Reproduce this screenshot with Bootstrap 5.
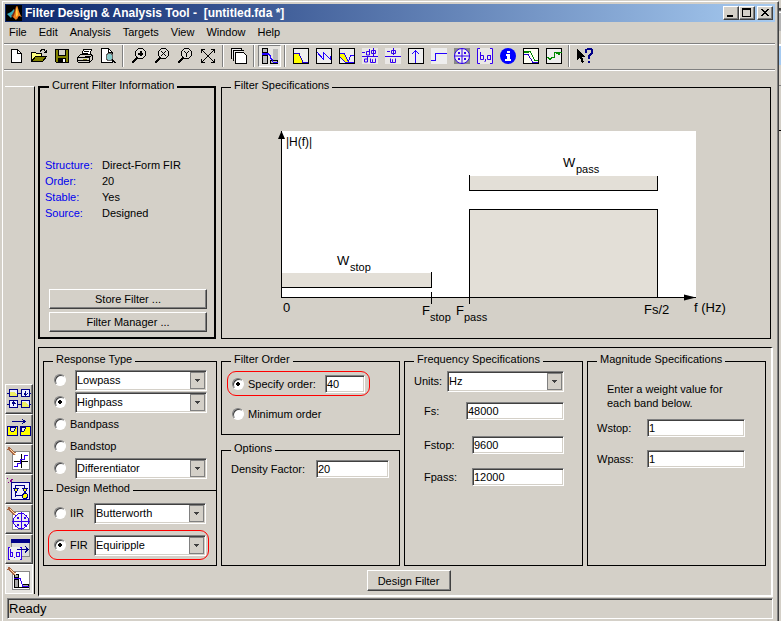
<!DOCTYPE html>
<html lang="en">
<head>
<meta charset="utf-8">
<meta name="viewport" content="width=device-width, initial-scale=1">
<title>Filter Design &amp; Analysis Tool</title>
<link href="https://cdn.jsdelivr.net/npm/bootstrap@5.3.0/dist/css/bootstrap.min.css" rel="stylesheet">
<style>
:root{--face:#d4d0c8;--dark:#404040;--mid:#808080}
body{background:linear-gradient(var(--face) 8px,var(--dark) 8px 10px,#fff 12px 13px,#b4b4b4 13px 31px,var(--face) 31px 44px,#fff 44px 46px,#a6caf0 46px 65px,var(--face) 65px 85px,var(--mid) 85px 86px,var(--face) 86px 130px,#000 130px 131px,var(--face) 131px) right top/3px 100% no-repeat var(--face);color:#000;font:11px/14px "Liberation Sans",Arial,sans-serif}
svg{display:block;flex:none}
.app-window{min-height:calc(100vh - 1px);background:var(--face);border-left:1px solid #fff;border-right:1px solid var(--dark);box-shadow:inset -1px 0 var(--mid);margin:1px 2px 0;padding:2px;border-top:1px solid #fff}
.title-strip{background:linear-gradient(90deg,#0a246a,#a6caf0);height:18px;color:#fff;font:bold 12px/18px "Liberation Sans",Arial,sans-serif;padding:0 2px 0 1px;margin-right:1px}
.title-strip h1{font:inherit;margin:0 0 0 1px;white-space:pre}
.raised{background:var(--face);border:1px solid;border-color:#fff var(--dark) var(--dark) #fff;box-shadow:inset -1px -1px var(--mid);border-radius:0;padding:0;color:#000;font-size:11px;line-height:14px}
.raised:hover{background:var(--face)}
.caption-btn{width:16px;height:14px}
.close-btn{margin-left:2px}
.menu-strip{height:21px}
.menu-strip .nav{margin-left:-2px}
.menu-strip .nav-link{color:#000;padding:3px 6px;line-height:14px}
.tool-strip{height:27px;border-top:1px solid var(--mid);border-bottom:1px solid var(--mid);box-shadow:inset 0 1px #fff,0 1px #fff;margin:0 1px 1px -1px;padding-top:1px}
.tool{width:23px;height:22px;padding:0;border:0;border-radius:0;display:flex;align-items:center;justify-content:center}
.tool.pressed{border:1px solid;border-color:var(--mid) #fff #fff var(--mid);background:#e6e4e0}
.tool-sep{width:2px;height:22px;margin:0 3px;border-left:1px solid var(--mid);border-right:1px solid #fff}
.side-strip{width:30px;border-top:1px solid #fff;border-right:1px solid #000;margin:15px 0 4px}
.side-btn{width:28px;height:30px;display:flex;align-items:center;justify-content:center}
.side-btn.pressed{border-color:#fff;box-shadow:none;background:#e6e4e0}
.work{padding:7px 3px 1px 3px}
.top-row{gap:5px;padding-right:2px}
.info-col{width:178px}
fieldset.group{border:1px solid #000;min-width:0}
fieldset.thick{border-width:2px}
fieldset.group>legend{float:none;width:auto;font-size:11px;line-height:14px;margin:0 0 -4px 9px;padding:0 3px 4px}
.facts{margin:65px 0 0 5px;line-height:16px;display:grid;grid-template-columns:57px 1fr}
.facts dt{font-weight:400;color:#00e}
.facts dt,.facts dd{margin:0}
.store-btns{gap:3px;padding:0 7px 5px 9px}
.push{height:20px}
.lower{border:solid;border-width:1px 2px 2px 1px;border-color:#000 #fff #fff #000;margin-top:8px;padding:4px 5px 4px 4px}
.quad{display:grid;grid-template-columns:174px repeat(3,minmax(0,1fr));gap:4px}
.pick{appearance:none;flex:none;width:12px;height:12px;margin:0 4px 0 0;border-radius:50%;border:1px solid;border-color:var(--mid) #fff #fff var(--mid);background:#fff;box-shadow:inset 1px 1px var(--dark)}
.pick:checked{background:radial-gradient(circle at 5px 5px,#000 0 2px,#fff 2px)}
.row-line{height:22px;display:flex;align-items:center;padding:0 9px 0 10px}
.row-line select.field{margin-left:5px}
.field{border:1px solid;border-color:var(--mid) #fff #fff var(--mid);box-shadow:inset 1px 1px var(--dark),inset -1px -1px var(--face);border-radius:0;background-color:#fff;color:#000;font:11px/14px "Liberation Sans",Arial,sans-serif;height:18px;padding:1px 1px;min-width:0}
select.field{height:21px;appearance:none;padding:1px 18px 1px 1px;background:#fff url("data:image/svg+xml,%3Csvg xmlns='http://www.w3.org/2000/svg' width='15' height='17' shape-rendering='crispEdges'%3E%3Cpath fill='%23d4d0c8' d='M0 0h15v17H0z'/%3E%3Cpath fill='none' stroke='%23808080' d='M0 .5h14.5V16.5H.5V0'/%3E%3Cpath fill='%23404040' d='M5 7h5v1H5zM6 8h3v1H6zM7 9h1v1H7z'/%3E%3C/svg%3E") no-repeat right 1px center}
.ring{border:1px solid red;border-radius:9px}
.ring.unmarked{border-color:transparent}
.design{margin-top:-9px}
.resp{padding-bottom:11px;border-bottom:0!important}
.resp .rows{padding-top:3px}
.design .rows{padding:3px 0 5px;display:grid;gap:2px}
.design .row-line{height:30px;margin:0 7px 0 4px;padding:0 2px 0 5px}
.design .row-line label{width:19px}
.col-two{gap:6px}
.order-body{padding:5px 29px 8px 5px}
.order-body .ring{height:25px;padding:0 4px}
.min-line{height:25px;margin-top:5px;padding-left:5px}
.w-order{width:40px}
.opt-body{padding:5px 10px 8px 9px}
.freq-body{padding:5px 18px 10px 9px}
.freq-body .ln{display:flex;align-items:center;justify-content:space-between;height:20px}
.freq-body .ln+.ln{margin-top:12px;padding-left:10px}
.freq-body .ln.fs-line{margin-top:10px}
.freq-body .ln.fs-line+.ln{margin-top:14px}
.w-units{width:117px}.w-fs{width:98px}.w-fp{width:92px}.w-dens{width:73px}.w-mag{width:98px}
.mag-body{padding:16px 20px 0 9px}
.mag-body p{margin:0 0 8px 10px}
.mag-body .ln{display:flex;align-items:center;justify-content:space-between;height:19px;margin-bottom:12px}
.actions{padding:4px 0 0 8px}
.go{width:84px;height:21px}
.state{height:21px;border:1px solid;border-color:var(--mid) #fff #fff var(--mid);box-shadow:inset 1px 1px var(--dark);margin:0 3px 0 2px;padding:2px 1px;font-size:13px;line-height:16px}
.plot{margin:38px auto 13px;max-width:100%;font-size:13px}
.plot .sub{font-size:11px}.plot .fn{font-size:12px}
</style>
<script src="https://cdn.jsdelivr.net/npm/bootstrap@5.3.0/dist/js/bootstrap.bundle.min.js"></script>
</head>
<body>
<div class="app-window d-flex flex-column">
<header>
<div class="title-strip d-flex align-items-center">
<svg width="18" height="16" viewBox="0 0 18 16"><path fill="#000" d="M0 0h16v16H0z"/><path fill="#39a9b8" d="M1 9l4-2 3-3 1 2-4 7z"/><path fill="#7b2b12" d="M5 11c3-2 4-10 6-10l1 13-4-1z"/><path fill="#f08020" d="M7 12c2-2 3-11 4-11s2 8 5 11l-3-1-3 4z"/><path fill="#ffd040" d="M10 5l1-3 1 8-2 2z"/></svg>
<h1>Filter Design &amp; Analysis Tool -  [untitled.fda *]</h1>
<button class="btn raised caption-btn ms-auto d-flex" aria-label="Minimize"><svg width="14" height="12"><path d="M3 8h6v2H3z"/></svg></button>
<button class="btn raised caption-btn d-flex" aria-label="Maximize"><svg width="14" height="12" shape-rendering="crispEdges"><path fill-rule="evenodd" d="M2 1h9v9H2zM3 3h7v6H3z"/></svg></button>
<button class="btn raised caption-btn close-btn d-flex" aria-label="Close"><svg width="14" height="12" shape-rendering="crispEdges"><path d="M3 2h2v1h1v1h2V3h1V2h2v1h-1v1H9v1H8v1h1v1h1v1h1v1H9V8H8V7H6v1H5v1H3V8h1V7h1V6h1V5H5V4H4V3H3z"/></svg></button>
</div>
<nav class="menu-strip" aria-label="Menu"><ul class="nav flex-nowrap">
<li><a class="nav-link" href="#">File</a></li><li><a class="nav-link" href="#">Edit</a></li><li><a class="nav-link" href="#">Analysis</a></li><li><a class="nav-link" href="#">Targets</a></li><li><a class="nav-link" href="#">View</a></li><li><a class="nav-link" href="#">Window</a></li><li><a class="nav-link" href="#">Help</a></li></ul></nav>
<div class="tool-strip d-flex" role="toolbar" aria-label="Tools">
<button class="btn tool" aria-label="New"><svg width="16" height="16" shape-rendering="crispEdges"><path fill="#fff" stroke="#000" d="M3.500 1.500h6l4 4v9h-10z"/><path fill="none" stroke="#000" d="M9.500 1.500v4h4"/></svg></button>
<button class="btn tool" aria-label="Open"><svg width="16" height="16" shape-rendering="crispEdges"><path fill="#ffff80" stroke="#000" d="M.5 13.500v-9h4l1 1h5v3h-6z"/><path fill="#808000" stroke="#000" d="M.5 13.500l4-5h11l-4 5z"/><path fill="none" stroke="#000" d="M9 3.500l2-2h2l2 3m-2 0h2v-3"/></svg></button>
<button class="btn tool" aria-label="Save"><svg width="16" height="16" shape-rendering="crispEdges"><path fill="#808000" stroke="#000" d="M1.500 1.500h13v13h-12l-1-1z"/><path fill="#d4d0c8" stroke="#000" d="M4.500 1.500h7v6h-7z"/><path d="M4 10h8v5H4z"/><path fill="#fff" d="M9 11h2v3H9z"/></svg></button>
<button class="btn tool" aria-label="Print"><svg width="16" height="16" shape-rendering="crispEdges"><path fill="#fff" stroke="#000" d="M4.500 7.500l2-6h8l-2 6z"/><path fill="#d4d0c8" stroke="#000" d="M.5 9.500l3-3h11l1 1v4l-3 3h-11l-1-1z"/><path stroke="#000" d="M7 3.500h5M6 5.500h5M1 9.500h11l3-2M1 12.500h11M12.500 10v4"/><path stroke="#808000" d="M6 11h4"/></svg></button>
<button class="btn tool" aria-label="Print preview"><svg width="16" height="16" shape-rendering="crispEdges"><path fill="#fff" stroke="#000" d="M1.500.5h7l4 4v10h-11z"/><path fill="none" stroke="#000" d="M8.500.5v4h4"/><circle cx="9.500" cy="9" r="3.500" fill="#8cc" stroke="#666"/><path stroke="#000" stroke-width="2" d="M12 11.500l3.500 3.500"/></svg></button>
<span class="tool-sep"></span>
<button class="btn tool" aria-label="Zoom in"><svg width="16" height="16" shape-rendering="crispEdges"><path fill="#fff3" stroke="#000" d="M7.500.5h4l3 3v4l-3 3h-4l-3-3v-4z"/><path stroke="#000" stroke-width="2" d="M9.500 3v5M7 5.500h5"/><path stroke="#000" stroke-width="2" d="M1 15l5-5"/></svg></button>
<button class="btn tool" aria-label="Zoom X"><svg width="16" height="16" shape-rendering="crispEdges"><path fill="#fff3" stroke="#000" d="M7.500.5h4l3 3v4l-3 3h-4l-3-3v-4z"/><path stroke="#000" d="M7 3l5 5m0-5L7 8"/><path stroke="#000" stroke-width="2" d="M1 15l5-5"/></svg></button>
<button class="btn tool" aria-label="Zoom Y"><svg width="16" height="16" shape-rendering="crispEdges"><path fill="#fff3" stroke="#000" d="M7.500.5h4l3 3v4l-3 3h-4l-3-3v-4z"/><path fill="none" stroke="#000" d="M7 3l2.500 2.500L12 3M9.500 5v4"/><path stroke="#000" stroke-width="2" d="M1 15l5-5"/></svg></button>
<button class="btn tool" aria-label="Full view"><svg width="16" height="16" shape-rendering="crispEdges"><path fill="none" stroke="#000" d="M1.500 5V1.500H5M11 1.500h3.500V5M14.500 11v3.500H11M5 14.500H1.500V11M2 2l12 12M14 2L2 14"/></svg></button>
<span class="tool-sep"></span>
<button class="btn tool" aria-label="Full view analysis"><svg width="16" height="16" shape-rendering="crispEdges"><path fill="#eee" stroke="#000" d="M.5 11V.5H10V3M2.500 13V2.500H13"/><path fill="#fff" stroke="#000" d="M4.500 4.500h8l3 3v8h-11z"/></svg></button>
<span class="tool-sep"></span>
<button class="btn tool pressed" aria-label="Filter specifications" aria-pressed="true"><svg width="16" height="16" shape-rendering="crispEdges"><path fill="#bbb" stroke="#000" d="M.5.500h5v4h-5zM.5 7.500h5v8h-5z"/><path fill="#bbb" stroke="#000" d="M10.500 .5h5v11h-5z" stroke-width="0"/><path stroke="#000" fill="#bbb" d="M8.500 12.500h7v3h-7z"/><path fill="none" stroke="#20f" stroke-width="1" d="M0 5.500h6l2 2v2l2 2v2l2 1h4M0 6.500h6"/></svg></button>
<span class="tool-sep"></span>
<button class="btn tool" aria-label="Magnitude response"><svg width="16" height="16" shape-rendering="crispEdges"><path fill="#eee" stroke="#000" d="M.5.500h15v15H.5z"/><path fill="#ff0" d="M1 5h5l4 9v1H1z"/><path fill="none" stroke="#20c" d="M1 5.500h5l4 9h5"/></svg></button>
<button class="btn tool" aria-label="Phase response"><svg width="16" height="16" shape-rendering="crispEdges"><path fill="#eee" stroke="#000" d="M.5.500h15v15H.5z"/><path fill="none" stroke="#20f" d="M1 4l6 7V4l7 7v-3"/></svg></button>
<button class="btn tool" aria-label="Magnitude and phase"><svg width="16" height="16" shape-rendering="crispEdges"><path fill="#eee" stroke="#000" d="M.5.500h15v15H.5z"/><path fill="#ff0" d="M1 5h4l5 9H6L1 9z"/><path fill="none" stroke="#20f" d="M1 5.500h4l5 9h5M1 9l5 5h3l3-7h3"/></svg></button>
<button class="btn tool" aria-label="Group delay"><svg width="16" height="16"><path fill="#eae8e6" d="M0 0h16v16H0z"/><path fill="none" stroke="#30e" d="M0 4.500h3M7.500 1v6h-3V3.500h3M11.500 0v8M9.500 2.500h4v3h-4zM0 8.500h16M5.500 9v5h-3v-3h3M8.500 10.500v4h2v-3 3h3v-4"/></svg></button>
<button class="btn tool" aria-label="Phase delay"><svg width="16" height="16"><path fill="#eae8e6" d="M0 0h16v16H0z"/><path fill="none" stroke="#30e" d="M2 3.500h3M8.500 0v7M6.500 2.500h4v3h-4zM0 8.500h16M5.500 10.500v4h2v-3 3h3v-4"/></svg></button>
<button class="btn tool" aria-label="Impulse response"><svg width="16" height="16" shape-rendering="crispEdges"><path fill="#eee" stroke="#000" d="M.5.500h15v15H.5z"/><path fill="none" stroke="#20f" d="M7.500 15V2M4 6l3.500-3.500L11 6"/></svg></button>
<button class="btn tool" aria-label="Step response"><svg width="16" height="16" shape-rendering="crispEdges"><path fill="#eee" d="M0 0h16v16H0z"/><path fill="none" stroke="#20f" d="M0 12.500h4.500v-7H16"/></svg></button>
<button class="btn tool" aria-label="Pole-zero plot"><svg width="16" height="16"><path fill="#888" d="M0 0h16v16H0z"/><circle cx="8" cy="8" r="7.500" fill="#eee" stroke="#30e"/><path stroke="#30e" d="M8 0v16M0 8h16M4 4l2 2m0-2L4 6M10 4l2 2m0-2l-2 2M4 10l2 2m0-2l-2 2M10 10l2 2m0-2l-2 2"/></svg></button>
<button class="btn tool" aria-label="Filter coefficients"><svg width="16" height="16"><path fill="#eae8e6" d="M0 0h16v16H0z"/><path fill="none" stroke="#30e" d="M3 .5H.5v15H3M13 .5h2.500v15H13M3.500 4v7.500h3v-4h-3M8.500 11v2l-1 1M13.500 7v5M13 7.500h-2.500v4h3"/></svg></button>
<button class="btn tool" aria-label="Filter information"><svg width="16" height="16"><circle cx="8" cy="8" r="8" fill="#00f"/><path fill="#fff" d="M7 3h3v2H7zM6 6h4v5h1v2H5v-2h2V8H6z"/></svg></button>
<button class="btn tool" aria-label="Magnitude response estimate"><svg width="16" height="16" shape-rendering="crispEdges"><path fill="#fffff4" stroke="#000" d="M.5.500h15v15H.5z"/><path fill="none" stroke="#080" d="M1 3.500h6l5 9h3M1 4.500h5"/><path fill="none" stroke="#20c" d="M1 6.500h4l5 8h5"/></svg></button>
<button class="btn tool" aria-label="Round-off noise"><svg width="16" height="16" shape-rendering="crispEdges"><path fill="#eee" stroke="#000" d="M.5.500h15v15H.5z"/><path fill="none" stroke="#080" d="M1 9.500h1.500v1h3v-1h3v-5h2v1h1v-1h1v2h1v-2h2M3 11.500h2"/></svg></button>
<span class="tool-sep"></span>
<button class="btn tool" aria-label="What's this?"><svg width="18" height="16" shape-rendering="crispEdges"><path d="M1 1l8 8H6l2 5-2 1-2-5-3 2z"/><path fill="none" stroke="#008" stroke-width="2" d="M10 5V2l2-1h3l1 1v3l-3 3v3M12 14h2"/></svg></button>
</div>
</header>
<div class="d-flex flex-grow-1">
<aside class="side-strip d-flex flex-column justify-content-end flex-shrink-0">
<button class="btn raised side-btn" aria-label="Realize model"><svg width="24" height="24" shape-rendering="crispEdges"><g fill="#eef" stroke="#008"><path fill="none" d="M0 6.500h24M0 17.500h24"/><path d="M2.500 2.500h8v7h-8zM14.500 2.500h8v7h-8zM2.500 13.500h8v7h-8zM14.500 13.500h8v7h-8z"/><path fill="none" d="M18.500 4v4M17 6.500l1.500 2 2-2M6.500 19v-4M5 17l1.500-2 2 2"/></g><path fill="#ee6" d="M3 5h4l3 3v1H3zM15 15h3l4 4v1h-7z"/></svg></button>
<button class="btn raised side-btn" aria-label="Transform filter"><svg width="24" height="24" shape-rendering="crispEdges"><path fill="none" stroke="#008" d="M5 4.500h13M15 2l3 2.500L15 7"/><path fill="#ff0" stroke="#008" d="M.5 9.500h10v9H.5zM13.500 9.500h10v9h-10z"/><path fill="#eee" stroke="#008" d="M3 10l1 4h3l2-4zM14 10h5l-2 4h-3z"/></svg></button>
<button class="btn raised side-btn" aria-label="Set quantization"><svg width="24" height="24" shape-rendering="crispEdges"><path fill="#fff" stroke="#888" d="M5.500 4.500h17v18h-17z"/><path stroke="#000" d="M7 14.500h14M14.500 7v14"/><path fill="none" stroke="#30e" d="M7 19.500h3v-3h3v-4h4v-4h4"/><path stroke="#a64" stroke-width="3" d="M1 1l7 6"/><path stroke="#fda" d="M3 2l6 6"/></svg></button>
<button class="btn raised side-btn" aria-label="Realize structure"><svg width="24" height="24" shape-rendering="crispEdges"><path stroke="#808" stroke-dasharray="2" d="M1 6l6-5M0 1l6 5"/><path fill="#eef" stroke="#008" d="M4.500 5.500h18v17h-18z"/><path fill="none" stroke="#008" d="M8.500 20V8.500h9V18M8 18.500h10"/><path fill="#ff0" stroke="#008" d="M6.500 11.500h5l-2.500 4zM15.500 11.500h5l-2.500 4z"/><circle cx="18" cy="19" r="2.500" fill="#ff0" stroke="#008"/></svg></button>
<button class="btn raised side-btn" aria-label="Pole-zero editor"><svg width="24" height="24" shape-rendering="crispEdges"><path fill="#fff" stroke="#888" d="M5.500 4.500h17v18h-17z"/><circle cx="14" cy="14" r="7.500" fill="#eee" stroke="#30e"/><path stroke="#30e" d="M14.500 5v18M5 14.500h18M10 10l2 2m0-2l-2 2M17 10l2 2m0-2l-2 2M10 17l2 2m0-2l-2 2M17 17l2 2m0-2l-2 2"/><path stroke="#a64" stroke-width="3" d="M1 1l7 6"/><path stroke="#fda" d="M3 2l6 6"/></svg></button>
<button class="btn raised side-btn" aria-label="Import filter"><svg width="24" height="24" shape-rendering="crispEdges"><path fill="#ddd" stroke="#888" d="M4.500 2.500h18v17h-18z"/><path fill="#008" d="M4 2h19v4H4z"/><path fill="#eee" d="M1 10h14v13H1z"/><path fill="none" stroke="#30e" d="M3 10.500H1.500v12H3M13 10.500h1.500v12H13M3.500 12v7h2v-4h-2M7 20v1M12.500 15v4H9.500v-4h3"/><path fill="none" stroke="#008" d="M10 12.500h11M18 9l3 3.500-3 3"/></svg></button>
<button class="btn raised side-btn pressed" aria-label="Design filter panel" aria-pressed="true"><svg width="24" height="24" shape-rendering="crispEdges"><path fill="#fff" stroke="#888" d="M5.500 4.500h17v18h-17z"/><path fill="#aaa" stroke="#000" d="M7.500 7.500h4v3h-4zM7.500 12.500h4v8h-4zM15.500 17.500h6v3h-6z"/><path stroke="#000" d="M7 20.500h15"/><path fill="none" stroke="#30e" d="M7 11.500h6l3 8h6"/><path stroke="#a64" stroke-width="3" d="M1 1l7 6"/><path stroke="#fda" d="M3 2l6 6"/></svg></button>
</aside>
<main class="work flex-grow-1 d-flex flex-column">
<div class="top-row d-flex">
<fieldset class="group thick info-col flex-shrink-0 d-flex flex-column"><legend>Current Filter Information</legend>
<dl class="facts"><dt>Structure:</dt><dd>Direct-Form FIR</dd><dt>Order:</dt><dd>20</dd><dt>Stable:</dt><dd>Yes</dd><dt>Source:</dt><dd>Designed</dd></dl>
<div class="store-btns d-grid mt-auto"><button class="btn raised push">Store Filter ...</button><button class="btn raised push">Filter Manager ...</button></div>
</fieldset>
<fieldset class="group flex-grow-1"><legend>Filter Specifications</legend>
<svg class="plot" width="464" height="195" viewBox="264 130 464 195" role="img" aria-label="Highpass filter specification">
<g shape-rendering="crispEdges"><path fill="#fff" d="M281 131h415v166H281z"/><path fill="#e3dfd7" d="M282 273h149v14H282zM470 176h187v14H470zM470 210h187v87H470z"/>
<path fill="none" stroke="#000" d="M281.500 131v166.500H696M281 287.500h150.500V272M431.500 292v12M469.500 175v15.500h188V176M469.500 304v-94.500h188V297"/></g>
<path d="M281.500 131l3.500 8h-7zM696 297.500l-12-3v6z"/>
<text class="fn" x="286" y="146">|H(f)|</text><text x="337" y="265">W</text><text class="sub" x="350" y="271">stop</text><text x="563" y="167">W</text><text class="sub" x="576" y="173">pass</text><text x="283" y="312">0</text><text x="422" y="315">F</text><text class="sub" x="430" y="321">stop</text><text x="456" y="315">F</text><text class="sub" x="464" y="321">pass</text><text x="644" y="314">Fs/2</text><text x="694" y="312">f (Hz)</text></svg>
</fieldset>
</div>
<div class="lower flex-grow-1 d-flex flex-column">
<div class="quad flex-grow-1">
<div class="d-flex flex-column">
<fieldset class="group resp"><legend>Response Type</legend><div class="rows">
<div class="row-line"><input class="pick" type="radio" name="resp" aria-label="Lowpass type"><select class="field flex-grow-1" aria-label="Lowpass variant"><option>Lowpass</option></select></div>
<div class="row-line"><input class="pick" type="radio" name="resp" checked aria-label="Highpass type"><select class="field flex-grow-1" aria-label="Highpass variant"><option>Highpass</option></select></div>
<div class="row-line"><input class="pick" type="radio" name="resp" id="bp"><label for="bp">Bandpass</label></div>
<div class="row-line"><input class="pick" type="radio" name="resp" id="bs"><label for="bs">Bandstop</label></div>
<div class="row-line"><input class="pick" type="radio" name="resp" aria-label="Other type"><select class="field flex-grow-1" aria-label="Other variant"><option>Differentiator</option></select></div>
</div></fieldset>
<fieldset class="group design flex-grow-1"><legend>Design Method</legend><div class="rows">
<div class="row-line ring unmarked"><input class="pick" type="radio" name="meth" id="iir"><label for="iir">IIR</label><select class="field flex-grow-1" aria-label="IIR method"><option>Butterworth</option></select></div>
<div class="row-line ring"><input class="pick" type="radio" name="meth" id="fir" checked><label for="fir">FIR</label><select class="field flex-grow-1" aria-label="FIR method"><option>Equiripple</option></select></div>
</div></fieldset>
</div>
<div class="col-two d-flex flex-column">
<fieldset class="group"><legend>Filter Order</legend><div class="order-body">
<div class="ring d-flex align-items-center"><input class="pick" type="radio" name="ord" id="so" checked><label for="so">Specify order:</label><input class="field w-order ms-auto" aria-label="Order" value="40"></div>
<div class="min-line d-flex align-items-center"><input class="pick" type="radio" name="ord" id="mo"><label for="mo">Minimum order</label></div>
</div></fieldset>
<fieldset class="group flex-grow-1"><legend>Options</legend><div class="opt-body d-flex align-items-center justify-content-between"><label for="df">Density Factor:</label><input class="field w-dens" id="df" value="20"></div></fieldset>
</div>
<fieldset class="group"><legend>Frequency Specifications</legend><div class="freq-body">
<div class="ln"><label for="un">Units:</label><select class="field w-units" id="un"><option>Hz</option></select></div>
<div class="ln fs-line"><label for="f1">Fs:</label><input class="field w-fs" id="f1" value="48000"></div>
<div class="ln"><label for="f2">Fstop:</label><input class="field w-fp" id="f2" value="9600"></div>
<div class="ln"><label for="f3">Fpass:</label><input class="field w-fp" id="f3" value="12000"></div>
</div></fieldset>
<fieldset class="group"><legend>Magnitude Specifications</legend><div class="mag-body">
<p>Enter a weight value for<br>each band below.</p>
<div class="ln"><label for="w1">Wstop:</label><input class="field w-mag" id="w1" value="1"></div>
<div class="ln"><label for="w2">Wpass:</label><input class="field w-mag" id="w2" value="1"></div>
</div></fieldset>
</div>
<div class="actions d-flex justify-content-center"><button class="btn raised go">Design Filter</button></div>
</div>
</main>
</div>
<footer class="state">Ready</footer>
</div>
</body>
</html>
